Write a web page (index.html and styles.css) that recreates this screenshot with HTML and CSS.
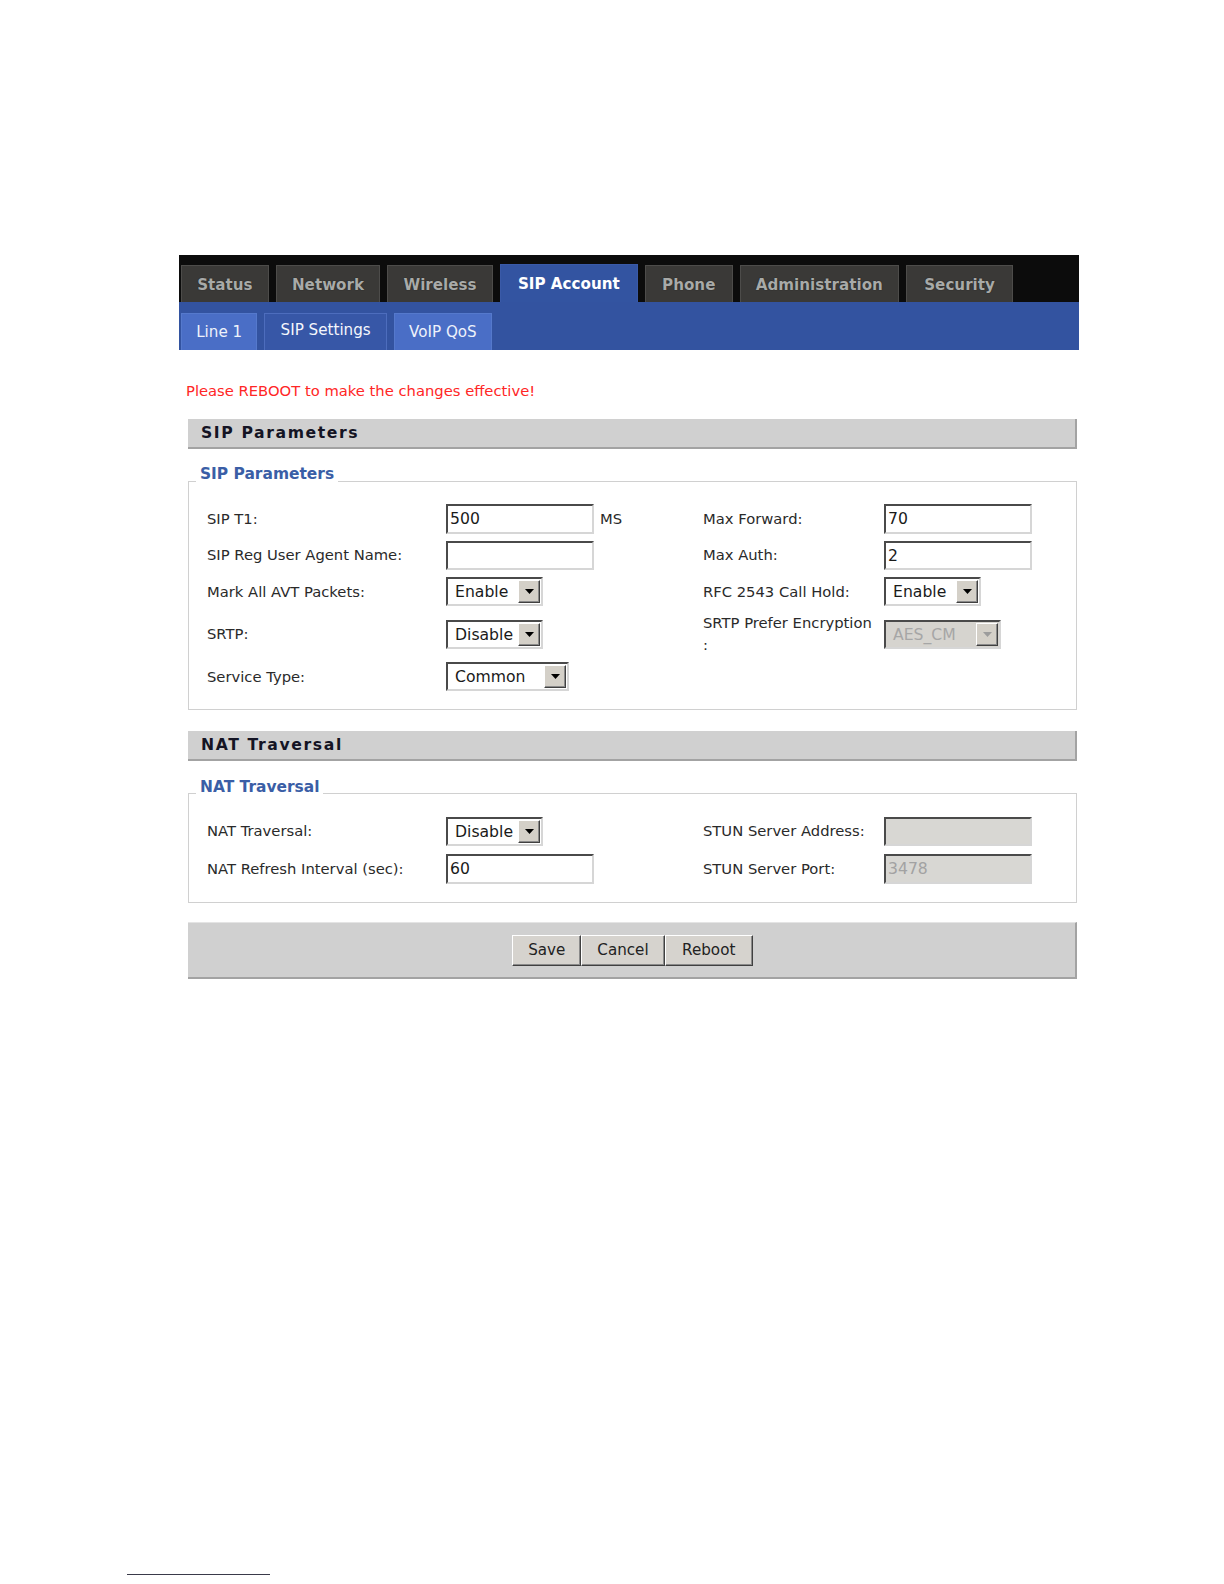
FILE: index.html
```html
<!DOCTYPE html>
<html lang="en">
<head>
<meta charset="utf-8">
<title>SIP Account - SIP Settings</title>
<link rel="stylesheet" href="styles.css">
</head>
<body>
<div class="page">
  <nav class="topnav">
    <a class="tab">Status</a>
    <a class="tab">Network</a>
    <a class="tab">Wireless</a>
    <a class="tab active">SIP Account</a>
    <a class="tab roomy">Phone</a>
    <a class="tab">Administration</a>
    <a class="tab roomier">Security</a>
  </nav>
  <div class="subnav">
    <a class="subtab">Line 1</a>
    <a class="subtab current">SIP Settings</a>
    <a class="subtab">VoIP QoS</a>
  </div>

  <div class="content">
    <p class="notice">Please REBOOT to make the changes effective!</p>

    <div class="section-head">SIP Parameters</div>
    <fieldset class="group">
      <legend>SIP Parameters</legend>
      <div class="form-grid sip">
        <label class="lbl">SIP T1:</label>
        <div class="ctl"><input class="txt" type="text" value="500"><span class="unit">MS</span></div>
        <label class="lbl">Max Forward:</label>
        <div class="ctl"><input class="txt" type="text" value="70"></div>

        <label class="lbl">SIP Reg User Agent Name:</label>
        <div class="ctl"><input class="txt" type="text" value=""></div>
        <label class="lbl">Max Auth:</label>
        <div class="ctl"><input class="txt" type="text" value="2"></div>

        <label class="lbl">Mark All AVT Packets:</label>
        <div class="ctl"><span class="select w97"><span class="select-value">Enable</span><span class="select-btn"><svg width="9" height="5" viewBox="0 0 9 5"><polygon points="0,0 9,0 4.5,5"/></svg></span></span></div>
        <label class="lbl">RFC 2543 Call Hold:</label>
        <div class="ctl"><span class="select w97"><span class="select-value">Enable</span><span class="select-btn"><svg width="9" height="5" viewBox="0 0 9 5"><polygon points="0,0 9,0 4.5,5"/></svg></span></span></div>

        <label class="lbl">SRTP:</label>
        <div class="ctl"><span class="select w97"><span class="select-value">Disable</span><span class="select-btn"><svg width="9" height="5" viewBox="0 0 9 5"><polygon points="0,0 9,0 4.5,5"/></svg></span></span></div>
        <label class="lbl">SRTP Prefer Encryption<br>:</label>
        <div class="ctl"><span class="select w117 disabled"><span class="select-value">AES_CM</span><span class="select-btn"><svg width="9" height="5" viewBox="0 0 9 5"><polygon points="0,0 9,0 4.5,5"/></svg></span></span></div>

        <label class="lbl">Service Type:</label>
        <div class="ctl"><span class="select w123"><span class="select-value">Common</span><span class="select-btn"><svg width="9" height="5" viewBox="0 0 9 5"><polygon points="0,0 9,0 4.5,5"/></svg></span></span></div>
        <span></span>
        <span></span>
      </div>
    </fieldset>

    <div class="section-head second">NAT Traversal</div>
    <fieldset class="group">
      <legend>NAT Traversal</legend>
      <div class="form-grid nat">
        <label class="lbl">NAT Traversal:</label>
        <div class="ctl"><span class="select w97"><span class="select-value">Disable</span><span class="select-btn"><svg width="9" height="5" viewBox="0 0 9 5"><polygon points="0,0 9,0 4.5,5"/></svg></span></span></div>
        <label class="lbl">STUN Server Address:</label>
        <div class="ctl"><input class="txt" type="text" value="" disabled></div>

        <label class="lbl">NAT Refresh Interval (sec):</label>
        <div class="ctl"><input class="txt" type="text" value="60"></div>
        <label class="lbl">STUN Server Port:</label>
        <div class="ctl"><input class="txt" type="text" value="3478" disabled></div>
      </div>
    </fieldset>

    <div class="button-bar">
      <button class="btn" type="button">Save</button>
      <button class="btn" type="button">Cancel</button>
      <button class="btn wide" type="button">Reboot</button>
    </div>
  </div>
</div>
<div class="footnote-rule"></div>
</body>
</html>
```

FILE: styles.css
```css
* { box-sizing: border-box; }

html, body {
  margin: 0;
  padding: 0;
  background: #ffffff;
}

body {
  font-family: "DejaVu Sans", Verdana, sans-serif;
  color: #2a2a2a;
  min-height: 1584px;
  display: flex;
  flex-direction: column;
}

.page {
  width: 900px;
  margin-left: 179px;
  padding-top: 255px;
}

/* ---------- top tabs ---------- */
.topnav {
  height: 46.5px;
  background: #0c0c0c;
  display: flex;
  align-items: flex-end;
  gap: 7px;
  padding-left: 2px;
}

.tab {
  height: 36.5px;
  padding: 0 15.2px;
  background: #3a3937;
  border: 1px solid #4d4c4a;
  border-bottom: 0;
  color: #a8aaa8;
  font-weight: bold;
  font-size: 15.15px;
  line-height: 38px;
  text-shadow: 0 0 1px #111;
  white-space: nowrap;
}

.tab.roomy { padding: 0 16.2px; }
.tab.roomier { padding: 0 17.2px; }

.tab.active {
  height: 37.5px;
  padding: 0 17.2px;
  background: #3354a1;
  border-color: #3a5aa8;
  color: #ffffff;
  line-height: 38.5px;
  text-shadow: none;
}

/* ---------- sub tabs ---------- */
.subnav {
  height: 48.5px;
  background: #3353a0;
  display: flex;
  align-items: flex-end;
  gap: 7px;
  padding-left: 2px;
}

.subtab {
  height: 37.5px;
  padding: 0 14.2px;
  background: #4a6ec6;
  border: 1px solid #5579cc;
  border-bottom: 0;
  color: #eef2fb;
  font-size: 15.15px;
  line-height: 37.5px;
  white-space: nowrap;
}

.subtab.current {
  background: #3757a7;
  border-color: #4d6dbd;
  color: #f4f6fc;
  line-height: 33.5px;
  padding: 0 15.2px;
}

/* ---------- content ---------- */
.content {
  padding: 0 2px 0 9px;
}

.notice {
  margin: 31px 0 0 -2px;
  font-size: 14.75px;
  line-height: 20px;
  color: #ff2626;
}

.section-head {
  margin-top: 18px;
  height: 30.3px;
  background: #d0d0d0;
  border-right: 2px solid #a3a3a3;
  border-bottom: 2px solid #a3a3a3;
  padding-left: 13px;
  font-weight: bold;
  font-size: 15.65px;
  letter-spacing: 1.6px;
  line-height: 28.3px;
  color: #141424;
}

.section-head.second {
  margin-top: 21.2px;
}

.group {
  margin: 16.2px 0 0;
  padding: 3px 0 14px 0;
  border: 1px solid #d0d0d0;
  min-width: 0;
}

.group legend {
  margin-left: 7px;
  padding: 0 4px 14.1px;
  font-weight: bold;
  font-size: 15.45px;
  line-height: 18.2px;
  color: #3a5ea6;
}

.form-grid {
  display: grid;
  grid-template-columns: 239px 257px 181px 1fr;
  align-items: center;
  padding-left: 18px;
}

.form-grid.sip {
  grid-template-rows: 36.4px 36.4px 36.4px 48.5px 36.4px;
}

.form-grid.nat {
  grid-template-rows: 37.4px 37.4px;
}

.lbl {
  font-size: 14.75px;
  line-height: 22.2px;
  color: #2a2a2a;
}

.ctl {
  display: flex;
  align-items: center;
}

.txt {
  width: 148px;
  height: 29.3px;
  margin: 0;
  padding: 0 2px;
  border: 2px solid;
  border-color: #4a4a4a #d6d6d6 #d6d6d6 #4a4a4a;
  background: #ffffff;
  font-family: "DejaVu Sans", Verdana, sans-serif;
  font-size: 15.65px;
  color: #1a1a1a;
  outline: none;
}

.txt:disabled {
  background: #d8d7d3;
  color: #a2a2a2;
}

.unit {
  margin-left: 6px;
  font-size: 14.75px;
  color: #2a2a2a;
}

/* fake select */
.select {
  display: inline-flex;
  align-items: center;
  height: 29.3px;
  padding: 0 1px 0 7px;
  border: 2px solid;
  border-color: #4a4a4a #d6d6d6 #d6d6d6 #4a4a4a;
  background: #ffffff;
  font-size: 15.65px;
  color: #1a1a1a;
}

.select.w97 { width: 97px; }
.select.w117 { width: 117px; }
.select.w123 { width: 123px; }

.select-value {
  flex: 1;
  white-space: nowrap;
}

.select-btn {
  width: 22px;
  height: 23px;
  display: flex;
  align-items: center;
  justify-content: center;
  background: #d4d0c8;
  border: 1px solid;
  border-color: #ffffff #404040 #404040 #ffffff;
  box-shadow: inset -1px -1px 0 #8a8a8a;
}

.select-btn svg {
  fill: #000000;
}

.select.disabled {
  background: #d6d4cf;
}

.select.disabled .select-value {
  color: #a6a6a6;
}

.select.disabled .select-btn svg {
  fill: #9c9c9c;
}

/* buttons */
.button-bar {
  margin-top: 19.2px;
  height: 57.5px;
  padding-left: 2px;
  background: #d0d0d0;
  border-top: 1px solid #e4e4e4;
  border-right: 2px solid #a3a3a3;
  border-bottom: 2px solid #a3a3a3;
  display: flex;
  justify-content: center;
  align-items: center;
}

.btn {
  height: 31px;
  margin: 0;
  padding: 0 15px;
  background: #d6d3ce;
  border: 1px solid;
  border-color: #ffffff #404040 #404040 #ffffff;
  box-shadow: inset -1px -1px 0 #8a8a8a;
  font-family: "DejaVu Sans", Verdana, sans-serif;
  font-size: 15.15px;
  color: #222222;
}

.btn.wide {
  padding: 0 16.5px;
}

/* footnote separator */
.footnote-rule {
  margin: auto 0 9px 127px;
  width: 143px;
  height: 1px;
  background: #3a3a4a;
}
```
